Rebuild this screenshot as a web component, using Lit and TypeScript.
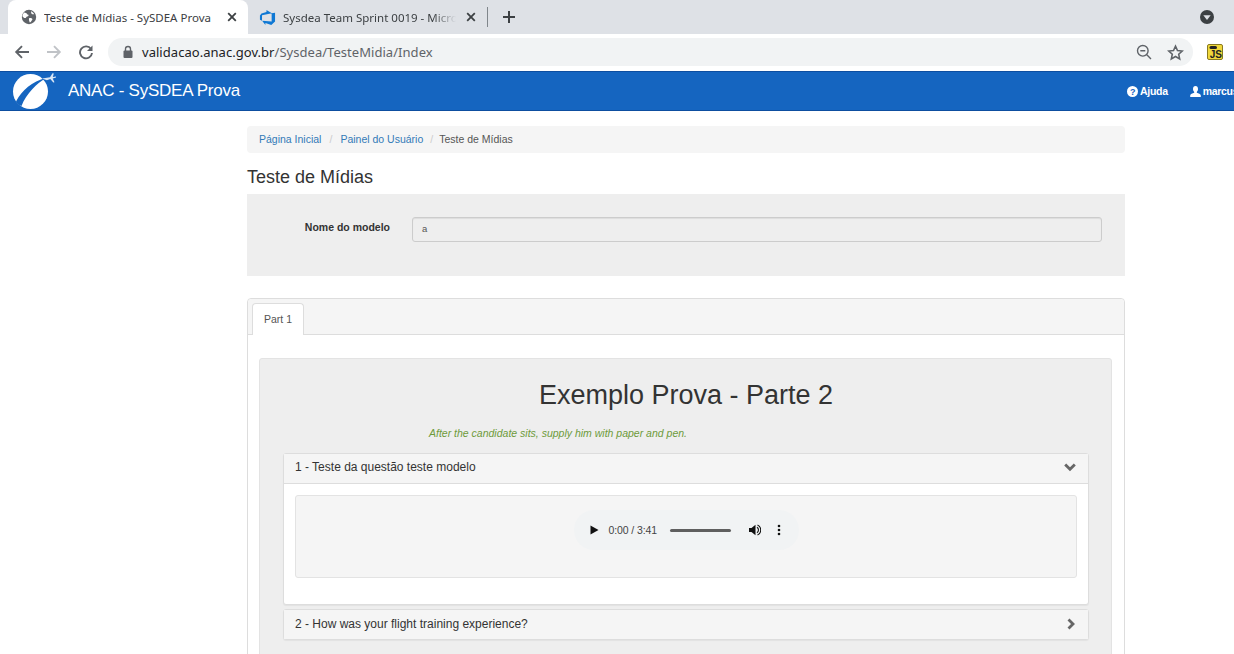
import { LitElement, html, css } from "lit";
import { customElement } from "lit/decorators.js";

@customElement("app-root")
export class AppRoot extends LitElement {
  static styles = css`
    :host { display: block; width: 1234px; height: 654px; overflow: hidden; background: #fff; font-family: "Liberation Sans", Arial, sans-serif; color: #333; }
    * { box-sizing: border-box; }
    svg { display: block; flex: none; }
    .strip { height: 34px; background: #dee1e6; display: flex; align-items: flex-end; position: relative; }
    .tab { height: 34px; display: flex; align-items: center; font-family: "Noto Sans", "Open Sans", sans-serif; font-size: 11.5px; color: #3c4043; white-space: nowrap; }
    .tab.active { width: 240px; margin-left: 8px; background: #fff; border-radius: 8px 8px 0 0; padding-left: 13px; color: #3c4043; }
    .tab .title { margin-left: 7px; width: 181px; overflow: hidden; }
    .tab.other { width: 239px; padding-left: 11px; }
    .tab.other .title { margin-left: 7px; width: 173px; overflow: hidden; -webkit-mask-image: linear-gradient(90deg, #000 150px, transparent 173px); mask-image: linear-gradient(90deg, #000 150px, transparent 173px); }
    .other .x { margin-left: 8px; }
    .sep { width: 1px; height: 20px; background: #80868b; margin: 0 0 7px 0; align-self: flex-end; }
    .plus { margin-left: 14px; align-self: center; }
    .prof { margin-left: auto; margin-right: 20px; align-self: center; }
    .toolbar { height: 36px; background: #fff; display: flex; align-items: center; border-bottom: 0; padding-left: 14px; }
    .nav { display: flex; gap: 16px; align-items: center; }
    .omni { margin-left: 14px; width: 1085px; height: 28px; background: #f1f3f4; border-radius: 14px; display: flex; align-items: center; padding-left: 14px; font-family: "Noto Sans", "Open Sans", sans-serif; font-size: 13px; letter-spacing: 0.04px; color: #5f6368; }
    .omni .host { color: #202124; }
    .omni .url { margin-left: 8px; }
    .omni .end { margin-left: auto; display: flex; gap: 13px; align-items: center; margin-right: 9px; }
    .star { margin-left: 2px; }
    .js { margin-left: 14px; }
    .navbar { height: 40px; margin-top: 1px; background: #1565c0; border-top: 1px solid #0d4ea0; border-bottom: 1px solid #0d4ea0; display: flex; align-items: center; color: #fff; padding-left: 12px; white-space: nowrap; position: relative; }
    .brand { font-size: 17px; margin-left: 12px; letter-spacing: -0.25px; }
    .navlinks { margin-left: auto; display: flex; align-items: center; font-size: 10.5px; font-weight: bold; letter-spacing: -0.3px; width: 107px; overflow: hidden; flex: none; }
    .navlink { display: flex; align-items: center; gap: 2px; }
    .navlink + .navlink { margin-left: 22px; }
    .container { width: 878px; margin: 15px 0 0 247px; }
    .crumb { height: 27px; background: #f5f5f5; border-radius: 4px; display: flex; align-items: center; padding: 0 0 2px 12px; font-size: 10.5px; color: #555; }
    .crumb a { color: #337ab7; }
    .crumb i { font-style: normal; color: #ccc; margin: 0 8px; }
    .crumb i.last { margin: 0 6px 0 7px; }
    h1 { font-size: 18px; font-weight: normal; margin: 14px 0 7px; line-height: 20px; color: #333; }
    .form { height: 82px; background: #eee; display: flex; padding-top: 23px; }
    .form label { width: 143px; text-align: right; font-size: 10.5px; font-weight: bold; line-height: 20px; color: #333; }
    .input { margin-left: 22px; width: 690px; height: 25px; border: 1px solid #ccc; border-radius: 3px; background: #eee; font-size: 9.5px; color: #555; padding-left: 9px; line-height: 21px; box-shadow: inset 0 1px 1px rgba(0,0,0,.075); }
    .tabs { margin-top: 22px; border: 1px solid #ddd; border-radius: 4px 4px 0 0; height: 400px; }
    .tabhead { height: 36px; background: #f5f5f5; border-bottom: 1px solid #ddd; padding: 4px 0 0 4px; border-radius: 4px 4px 0 0; }
    .tabitem { width: 52px; height: 32px; background: #fff; border: 1px solid #ddd; border-bottom: 0; border-radius: 4px 4px 0 0; font-size: 10.5px; color: #555; display: flex; align-items: center; justify-content: center; padding-bottom: 2px; }
    .tabbody { padding: 23px 12px 0 11px; }
    .well { background: #eee; border: 1px solid #e3e3e3; border-radius: 3px; height: 320px; padding: 0 22px 0 23px; }
    h2 { font-size: 27px; font-weight: normal; text-align: center; margin: 0; padding-top: 21px; line-height: 30px; height: 60px; color: #333; }
    .note { font-size: 10.5px; font-style: italic; color: #6d9a3a; line-height: 12px; margin: 8px 0 14px 146px; }
    .panel { background: #fff; border: 1px solid #ddd; border-radius: 3px; box-shadow: 0 1px 1px rgba(0,0,0,.05); }
    .panel + .panel { margin-top: 4px; }
    .phead { height: 29px; background: #f5f5f5; display: flex; align-items: center; justify-content: space-between; padding: 0 11px 1px 11px; font-size: 12px; color: #333; }
    .panel.open .phead { border-bottom: 1px solid #ddd; height: 30px; padding: 0 12px 3px 11px; }
    .pbody { padding: 11px 11px 26px; }
    .inner { height: 83px; background: #f5f5f5; border: 1px solid #e3e3e3; border-radius: 3px; display: flex; justify-content: center; padding-top: 14px; }
    .audio { width: 225px; height: 40px; border-radius: 20px; background: #f1f3f4; display: flex; align-items: center; padding-left: 16px; font-size: 10.5px; color: #444; }
    .time { margin-left: 10px; width: 61px; white-space: nowrap; letter-spacing: -0.1px; }
    .track { width: 61px; height: 3px; background: #5f5f5f; border-radius: 1.500px; }
    .vol { margin-left: 18px; }
    .dots { margin-left: 16px; }
  `;

  private xIcon() {
    return html`<svg class="x" width="14" height="14" viewBox="0 0 14 14"><path d="M3.200 3.200l7.600 7.600M10.800 3.200l-7.600 7.600" stroke="#3c4043" stroke-width="1.800" fill="none"/></svg>`;
  }

  render() {
    return html`
      <div class="strip">
        <div class="tab active">
          <svg width="16" height="16" viewBox="0 0 16 16"><circle cx="8" cy="8" r="7.200" fill="#5f6368"/><path d="M3 3.500c1.500.2 2.600.5 3 1.400.3.800 1.600.4 1.600 1.400 0 .9-1.200 1-2 1.500-.5.4-.3 1.400-1.200 1.200C3.300 9.300 2 7.800 1.400 7.200 1.600 5.800 2.200 4.500 3 3.500zM8.400 9c1.200-.3 2.700.1 3 1 .2.900-.6 1.400-1 2.100-.4.700-.7 1.400-1.600 1.500-.4-1.300-1.600-3.800-.4-4.600zM10 2.200c1.300.5 2.600 1.600 3.200 3-.9.300-2 .2-2.600-.4-.5-.6-.4-1.700-.6-2.600z" fill="#fff"/></svg>
          <span class="title">Teste de Mídias - SySDEA Prova</span>
          ${this.xIcon()}
        </div>
        <div class="tab other">
          <svg width="17" height="17" viewBox="0 0 18 18"><path d="M17 4v9.300L13 17l-6.200-2.300V17l-3.500-4.500 10.100.8V4.600L17 4zm-3.400.5L7.900 1v2.300L2.600 4.800 1 6.900v4.600l2.200 1V6.500l10.400-2z" fill="#0f78d4"/></svg>
          <span class="title">Sysdea Team Sprint 0019 - Microsoft Azure</span>
          ${this.xIcon()}
        </div>
        <div class="sep"></div>
        <svg class="plus" width="14" height="14" viewBox="0 0 14 14"><path d="M7 1v12M1 7h12" stroke="#3c4043" stroke-width="2"/></svg>
        <svg class="prof" width="14" height="14" viewBox="0 0 14 14"><circle cx="7" cy="7" r="7" fill="#3c4043"/><path d="M3.300 5.200h7.400L7 10z" fill="#dee1e6"/></svg>
      </div>
      <div class="toolbar">
        <div class="nav">
          <svg width="16" height="16" viewBox="0 0 16 16"><path d="M15 8H2.500M8 2.200L2.200 8 8 13.800" stroke="#5f6368" stroke-width="1.900" fill="none"/></svg>
          <svg width="16" height="16" viewBox="0 0 16 16"><path d="M1 8h12.500M8 2.200L13.800 8 8 13.800" stroke="#c0c3c7" stroke-width="1.900" fill="none"/></svg>
          <svg width="16" height="16" viewBox="0 0 16 16"><path d="M13 5A6 6 0 1 0 14 9" stroke="#5f6368" stroke-width="1.900" fill="none"/><path d="M14.500 1.500v5.500H9z" fill="#5f6368"/></svg>
        </div>
        <div class="omni">
          <svg width="12" height="14" viewBox="0 0 12 14"><rect x="1.500" y="5.500" width="9" height="7.500" rx="1" fill="#5f6368"/><path d="M3.500 6V4a2.500 2.500 0 0 1 5 0v2" stroke="#5f6368" stroke-width="1.400" fill="none"/></svg>
          <span class="url"><span class="host">validacao.anac.gov.br</span>/Sysdea/TesteMidia/Index</span>
          <span class="end">
            <svg width="16" height="16" viewBox="0 0 16 16"><circle cx="6.800" cy="6.800" r="5.300" stroke="#5f6368" stroke-width="1.400" fill="none"/><path d="M4.300 6.800h5M10.800 10.800l4.200 4.200" stroke="#5f6368" stroke-width="1.400"/></svg>
            <svg class="star" width="17" height="17" viewBox="0 0 24 24"><path d="M12 3l2.800 6.200 6.700.7-5 4.500 1.400 6.600L12 17.600 6.100 21l1.400-6.600-5-4.500 6.700-.7z" stroke="#5f6368" stroke-width="2.200" fill="none"/></svg>
          </span>
        </div>
        <svg class="js" width="16" height="16" viewBox="0 0 16 16"><rect x=".5" y=".5" width="15" height="15" rx="1.500" fill="#f0d83c" stroke="#8a7a20"/><rect x="2.500" y="2" width="7.500" height="3" rx="1.500" fill="#222"/><text x="2.800" y="14" font-family="Liberation Sans" font-size="10" font-weight="bold" fill="#222">JS</text></svg>
      </div>
      <div class="navbar">
        <svg width="44" height="38" viewBox="0 0 44 38"><circle cx="18.500" cy="19.500" r="17.500" fill="#fff"/><path d="M4 29.500C10 18 20 9.500 34 6 25 11.500 14.500 21 9.500 34 7 33 5 31.500 4 29.500z" fill="#1565c0"/><path d="M30 6.500l8-1.300 2.500-4 1.300.3-1 3.500 3.200-.5v1l-3.300 1 1.800 3.800-1.200.2-3-3.500-3.400 1.200z" fill="#dbe7f5"/></svg>
        <span class="brand">ANAC - SySDEA Prova</span>
        <div class="navlinks">
          <span class="navlink"><svg width="11" height="11" viewBox="0 0 11 11"><circle cx="5.500" cy="5.500" r="5.500" fill="#fff"/><text x="5.500" y="8.800" text-anchor="middle" font-family="Liberation Sans" font-size="9" font-weight="bold" fill="#1565c0">?</text></svg>Ajuda</span>
          <span class="navlink"><svg width="11" height="11" viewBox="0 0 11 11"><path d="M5.500 0C3.800 0 3 1.300 3 3c0 1.300.6 2.300 1.200 2.900v.8C2.600 7.300.2 7.800.2 9.500V11h10.600V9.500c0-1.700-2.400-2.200-4-2.800v-.8C7.400 5.300 8 4.300 8 3c0-1.700-.8-3-2.500-3z" fill="#fff"/></svg>marcus</span>
        </div>
      </div>
      <div class="container">
        <div class="crumb"><a>Página Inicial</a><i>/</i><a>Painel do Usuário</a><i class="last">/</i><span>Teste de Mídias</span></div>
        <h1>Teste de Mídias</h1>
        <div class="form">
          <label>Nome do modelo</label>
          <div class="input">a</div>
        </div>
        <div class="tabs">
          <div class="tabhead"><div class="tabitem">Part 1</div></div>
          <div class="tabbody">
            <div class="well">
              <h2>Exemplo Prova - Parte 2</h2>
              <div class="note">After the candidate sits, supply him with paper and pen.</div>
              <div class="panel open">
                <div class="phead"><span>1 - Teste da questão teste modelo</span>
                  <svg width="12" height="9" viewBox="0 0 12 9"><path d="M1.200 1.500L6 6.300l4.800-4.800" stroke="#666" stroke-width="2.800" fill="none"/></svg>
                </div>
                <div class="pbody">
                  <div class="inner">
                    <div class="audio">
                      <svg width="9" height="10" viewBox="0 0 9 10"><path d="M0.500 0.500L8.500 5 0.500 9.500z" fill="#111"/></svg>
                      <span class="time">0:00 / 3:41</span>
                      <div class="track"></div>
                      <svg class="vol" width="12" height="12" viewBox="0 0 12 12"><path d="M0 4h2.500L6.500 .8v10.400L2.500 8H0z" fill="#111"/><path d="M8 3.300a3.200 3.200 0 0 1 0 5.400M8.500 1a5.500 5.500 0 0 1 0 10" stroke="#111" stroke-width="1.100" fill="none"/></svg>
                      <svg class="dots" width="4" height="12" viewBox="0 0 4 12"><circle cx="2" cy="2" r="1.300" fill="#111"/><circle cx="2" cy="6" r="1.300" fill="#111"/><circle cx="2" cy="10" r="1.300" fill="#111"/></svg>
                    </div>
                  </div>
                </div>
              </div>
              <div class="panel">
                <div class="phead"><span>2 - How was your flight training experience?</span>
                  <svg width="12" height="12" viewBox="0 0 12 12"><path d="M3.500 1.500L8 6l-4.500 4.500" stroke="#666" stroke-width="2.800" fill="none"/></svg>
                </div>
              </div>
            </div>
          </div>
        </div>
      </div>
    `;
  }
}
